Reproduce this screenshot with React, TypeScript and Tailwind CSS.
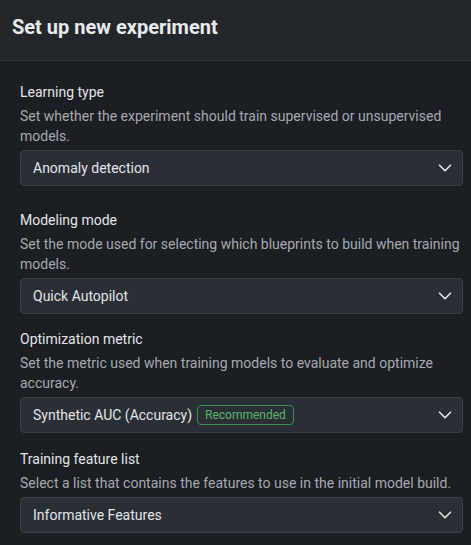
import React from 'react';
import { ChevronDown } from 'lucide-react';

type Field = {
  label: string;
  description: string;
  value: string;
  badge?: string;
  gap: string;
};

const fields: Field[] = [
  {
    label: 'Learning type',
    description: 'Set whether the experiment should train supervised or unsupervised models.',
    value: 'Anomaly detection',
    gap: 'mt-[21px]',
  },
  {
    label: 'Modeling mode',
    description: 'Set the mode used for selecting which blueprints to build when training models.',
    value: 'Quick Autopilot',
    gap: 'mt-6',
  },
  {
    label: 'Optimization metric',
    description: 'Set the metric used when training models to evaluate and optimize accuracy.',
    value: 'Synthetic AUC (Accuracy)',
    badge: 'Recommended',
    gap: 'mt-[15px]',
  },
  {
    label: 'Training feature list',
    description: 'Select a list that contains the features to use in the initial model build.',
    value: 'Informative Features',
    gap: 'mt-4',
  },
];

const SelectBox = ({ value, badge }: { value: string; badge?: string }) => (
  <button className="mt-1 w-full h-9 flex items-center justify-between pl-3 pr-[6px] rounded bg-[#2a2e35] border border-[#3b3f47] text-[14px] text-[#e3e5e8]">
    <span className="flex items-center gap-[5px]">
      {value}
      {badge && (
        <span className="h-5 px-[7px] flex items-center rounded border border-[#3e9150] text-[12px] text-[#5bb46d]">
          {badge}
        </span>
      )}
    </span>
    <ChevronDown size={22} strokeWidth={1.8} className="text-[#e3e5e8]" />
  </button>
);

export default function App() {
  return (
    <div className="w-[471px] h-[545px] overflow-hidden bg-[#1b1e22] font-['Roboto',sans-serif]">
      <header className="h-[61px] flex items-center pl-3 bg-[#23272c] border-b border-[#2f3339]">
        <h1 className="text-[20px] leading-7 font-bold text-[#e8eaed] pb-[7px]">Set up new experiment</h1>
      </header>

      <main className="pl-5 pr-2">
        {fields.map((f) => (
          <section key={f.label} className={f.gap}>
            <p className="text-[14px] leading-5 text-[#e3e5e8]">{f.label}</p>
            <p className="mt-1 text-[14px] leading-5 text-[#a6aab0]">{f.description}</p>
            <SelectBox value={f.value} badge={f.badge} />
          </section>
        ))}
      </main>
    </div>
  );
}
